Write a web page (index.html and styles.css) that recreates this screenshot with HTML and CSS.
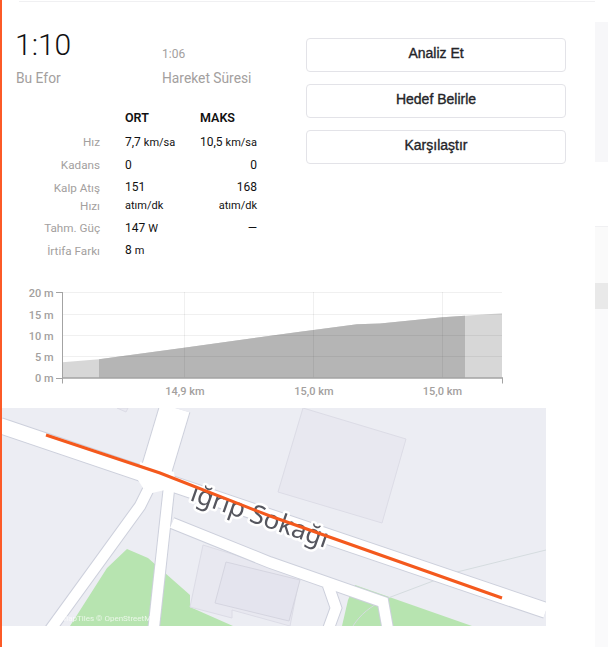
FILE: index.html
```html
<!DOCTYPE html>
<html lang="tr">
<head>
    <meta charset="UTF-8">
    <meta name="viewport" content="width=device-width, initial-scale=1.0">
    <title>Aktivite Efor</title>
    <link rel="stylesheet" href="styles.css">
</head>
<body>
    <div class="page">
        <main class="effort">
            <div class="top-rule"></div>
            <section class="summary">
                <div class="stats">
                    <div class="times">
                        <div class="time-block time-main">
                            <div class="time-value">1:10</div>
                            <div class="time-label">Bu Efor</div>
                        </div>
                        <div class="time-block time-moving">
                            <div class="time-value">1:06</div>
                            <div class="time-label">Hareket Süresi</div>
                        </div>
                    </div>
                    <table class="metrics">
                        <thead>
                            <tr><th></th><th class="col-avg">ORT</th><th class="col-max">MAKS</th></tr>
                        </thead>
                        <tbody>
                            <tr><th>Hız</th><td>7,7 <small>km/sa</small></td><td class="col-max">10,5 <small>km/sa</small></td></tr>
                            <tr><th>Kadans</th><td>0</td><td class="col-max">0</td></tr>
                            <tr class="two-line"><th>Kalp Atış<br>Hızı</th><td>151<br><small>atım/dk</small></td><td class="col-max">168<br><small>atım/dk</small></td></tr>
                            <tr><th>Tahm. Güç</th><td>147 <small>W</small></td><td class="col-max">—</td></tr>
                            <tr><th>İrtifa Farkı</th><td>8 <small>m</small></td><td></td></tr>
                        </tbody>
                    </table>
                </div>
                <div class="actions">
                    <button class="action-btn">Analiz Et</button>
                    <button class="action-btn">Hedef Belirle</button>
                    <button class="action-btn">Karşılaştır</button>
                </div>
            </section>

            <svg class="chart" width="544" height="132" viewBox="2 276 544 132">
                <path class="area-full" d="M62.5 362.300 L99 359.300 L184 347.700 L300 331.700 L313.500 330 L357 324.300 L380 323.500 L442.500 317.300 L465 315.700 L502 313.300 L502 378 L62.5 378 Z"/>
                <path class="area-selected" d="M99 359.300 L184 347.700 L300 331.700 L313.500 330 L357 324.300 L380 323.500 L442.500 317.300 L465 315.700 L465 378 L99 378 Z"/>
                <g class="grid">
                    <line x1="62" y1="292.500" x2="502" y2="292.500"/>
                    <line x1="62" y1="314.500" x2="502" y2="314.500"/>
                    <line x1="62" y1="335.500" x2="502" y2="335.500"/>
                    <line x1="62" y1="356.500" x2="502" y2="356.500"/>
                    <line x1="184.500" y1="292" x2="184.500" y2="378"/>
                    <line x1="313.500" y1="292" x2="313.500" y2="378"/>
                    <line x1="442.500" y1="292" x2="442.500" y2="378"/>
                </g>
                <g class="axis">
                    <line x1="62.500" y1="292" x2="62.500" y2="383.500"/>
                    <line class="baseline" x1="62" y1="378" x2="503" y2="378"/>
                    <line x1="502.500" y1="378" x2="502.500" y2="383.500"/>
                    <line x1="56" y1="292.500" x2="62" y2="292.500"/>
                    <line x1="56" y1="378.500" x2="62" y2="378.500"/>
                </g>
                <g class="y-labels">
                    <text x="53.500" y="297">20 m</text>
                    <text x="53.500" y="318.500">15 m</text>
                    <text x="53.500" y="340">10 m</text>
                    <text x="53.500" y="361">5 m</text>
                    <text x="53.500" y="382">0 m</text>
                </g>
                <g class="x-labels">
                    <text x="185" y="395">14,9 km</text>
                    <text x="314" y="395">15,0 km</text>
                    <text x="442.500" y="395">15,0 km</text>
                </g>
            </svg>

            <svg class="map" width="544" height="218" viewBox="2 408 544 218">
                <g class="tiles">
                    <rect x="2" y="408" width="544" height="218" fill="#ecedf3"/>
                    <!-- parks -->
                    <path class="park" d="M70 626 L107 568 L127 549 L148 558 L190 595 L190 607 L233 626 Z"/>
                    <path class="park" d="M355 585 L472 626 L342 626 L348 600 Z"/>
                    <!-- buildings -->
                    <path class="building" d="M117 408 L128 408 L126 412 Z"/>
                    <path class="building" d="M303 408 L406 439 L382 523 L278 492 Z"/>
                    <path class="building" d="M203 545 L245 558 L300 575 L290 626 L232 610 L232 618 L190 607 Z"/>
                    <path class="building inner" d="M226 562 L300 580 L289 621 L215 603 Z"/>
                    <path class="footway" d="M546 550 L457 572 L388 598 C370 606 360 615 353 626"/>
                    <!-- roads, casing first -->
                    <g class="road-casing">
                        <path class="main" d="M0 425.500 L546 610.500"/>
                        <path class="cross" d="M175 408 L157 468"/>
                        <path class="side" d="M148 490 L140 506 L50 630"/>
                        <path class="side" d="M169 488 L153.500 630"/>
                        <path class="side" d="M172 523 L270 562.500 L383 602 L388 630"/>
                        <path class="side" d="M328 585 L336 608 L328 630"/>
                    </g>
                    <g class="road">
                        <path class="main" d="M0 425.500 L546 610.500"/>
                        <path class="cross" d="M175 408 L157 468"/>
                        <path class="side" d="M148 490 L140 506 L50 630"/>
                        <path class="side" d="M169 488 L153.500 630"/>
                        <path class="side" d="M172 523 L270 562.500 L383 602 L388 630"/>
                        <path class="side" d="M328 585 L336 608 L328 630"/>
                        <path class="junction" d="M140 462 L174 472 L176 488 L165 490 L152 493 L143 488 L138 480 Z"/>
                    </g>
                    <path id="street" d="M189 500 L345 555" fill="none"/>
                    <text class="street-name"><textPath href="#street">ığrıp Sokağı</textPath></text>
                    <text class="street-name street-top"><textPath href="#street">ığrıp Sokağı</textPath></text>
                    <text class="attribution" x="53" y="621">© MapTiles © OpenStreetMap</text>
                </g>
                <path class="route" d="M46 435 L160 473 L270 516 L502 598"/>
            </svg>
        </main>
        <aside class="rail">
            <div class="rail-top"></div>
            <div class="rail-list">
                <div class="rail-head"></div>
                <div class="rail-band"></div>
                <div class="rail-body"></div>
            </div>
        </aside>
    </div>
</body>
</html>
```

FILE: styles.css
```css
html, body {
    margin: 0;
    padding: 0;
    background: #fff;
}

body {
    font-family: "Roboto", sans-serif;
    overflow: hidden;
}

.page {
    display: flex;
    height: 647px;
    border-left: 2px solid #fc5a27;
    box-sizing: border-box;
}

.effort {
    width: 593px;
    flex: none;
}

.top-rule {
    height: 1px;
    margin: 1px 0 0 17px;
    background: #f0f0f2;
}

.summary {
    display: flex;
    height: 274px;
}

.stats {
    width: 304px;
    flex: none;
}

.times {
    display: flex;
    padding: 28px 0 0 13px;
}

.time-block {
    color: #a3a09e;
}

.time-main {
    width: 147px;
}

.time-main .time-value {
    color: #111;
    font-size: 30px;
    font-weight: 300;
    line-height: 30px;
}

.time-moving {
    padding-top: 18px;
}

.time-moving .time-value {
    font-size: 12px;
    line-height: 13px;
}

.time-main .time-label {
    margin-top: 8px;
    padding-left: 1px;
}

.time-label {
    font-size: 13.8px;
    line-height: 20px;
    margin-top: 7px;
}

.metrics {
    border-collapse: collapse;
    margin-top: 16px;
    font-size: 12px;
    color: #111;
}

.metrics th, .metrics td {
    padding: 0;
    height: 22.5px;
    line-height: 18px;
    font-weight: 400;
    text-align: left;
}

.metrics tbody th {
    width: 98px;
    padding-right: 25px;
    font-size: 11.7px;
    text-align: right;
    color: #a3a09e;
}

.metrics thead th {
    font-size: 12.5px;
    font-weight: 600;
    height: 27px;
}

.metrics .col-avg {
    width: 75px;
}

.metrics .col-max {
    width: 57px;
    text-align: right;
}

.metrics thead .col-max {
    text-align: left;
}

.metrics small {
    font-size: 11px;
}

.two-line th, .two-line td {
    height: 41px;
}

.actions {
    display: flex;
    flex-direction: column;
    gap: 12px;
    width: 260px;
    padding-top: 36px;
}

.action-btn {
    height: 34px;
    background: #fff;
    border: 1px solid #e3e3e8;
    border-radius: 4px;
    color: #242428;
    font-family: "Liberation Sans", Arial, sans-serif;
    font-size: 14px;
    font-weight: 400;
    -webkit-text-stroke: 0.35px #242428;
    padding: 0 0 4px;
}

.chart {
    display: block;
}

.grid line {
    stroke: rgba(0, 0, 0, 0.06);
    stroke-width: 1;
}

.area-full {
    fill: #d7d7d7;
}

.area-selected {
    fill: #b5b5b5;
}

.axis line {
    stroke: #a3a3a3;
    stroke-width: 1;
}

.axis .baseline {
    stroke-width: 1.5;
}

.y-labels text, .x-labels text {
    font-size: 11px;
    font-weight: 500;
    fill: #a3a09e;
}

.y-labels text {
    text-anchor: end;
}

.x-labels text {
    text-anchor: middle;
}

.map {
    display: block;
}

.tiles {
    filter: blur(0.4px);
}

.park {
    fill: #b7e4b0;
}

.building {
    fill: #e8e8f0;
    stroke: #dcdce6;
    stroke-width: 1;
}

.building.inner {
    fill: #e4e4ee;
    stroke: #d5d5e0;
}

.footway {
    fill: none;
    stroke: #d5dcdf;
    stroke-width: 1;
}

.road-casing path, .road path {
    fill: none;
}

.road-casing path {
    stroke: #cdd0dc;
}

.road path {
    stroke: #fff;
}

.road-casing .main {
    stroke-width: 17px;
}

.road .main {
    stroke-width: 15px;
}

.road-casing .cross {
    stroke-width: 32px;
}

.road .cross {
    stroke-width: 30px;
}

.road-casing .side {
    stroke-width: 12.5px;
}

.road .side {
    stroke-width: 10.5px;
}

.road .junction {
    fill: #fff;
    stroke: none;
}

.street-name {
    font-family: "Noto Sans", sans-serif;
    font-size: 26px;
    fill: #fff;
    stroke: #fff;
    stroke-width: 5px;
    stroke-linejoin: round;
}

.street-top {
    fill: #55565e;
    stroke: none;
}

.attribution {
    font-size: 8px;
    fill: #fff;
    opacity: 0.7;
}

.route {
    fill: none;
    stroke: #f4591d;
    stroke-width: 3px;
}

.rail {
    flex: none;
    width: 13px;
    padding-top: 22px;
    box-sizing: border-box;
}

.rail-top {
    height: 140px;
    background: #f7f7f9;
}

.rail-list {
    margin-top: 64px;
    border-top: 1px solid #f0f0f2;
}

.rail-head {
    height: 56px;
    background: #fafafa;
}

.rail-band {
    height: 26px;
    background: #e9e9e9;
}

.rail-body {
    height: 338px;
    background: #fafafb;
}
```
